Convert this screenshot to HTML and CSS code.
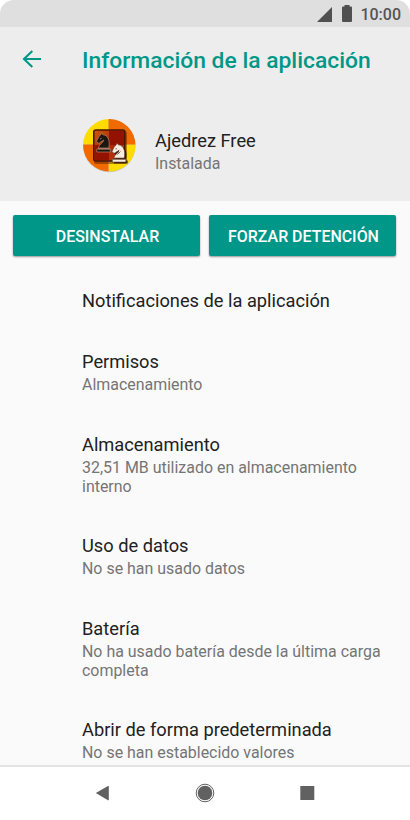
FILE: index.html
```html
<!DOCTYPE html>
<html lang="es">
<head>
<meta charset="utf-8">
<title>Información de la aplicación</title>
<link rel="stylesheet" href="styles.css">
</head>
<body>
<div class="phone">
  <div class="status">
    <svg class="signal" width="15" height="15" viewBox="0 0 15 15"><path d="M0 15L15 0V15Z"/></svg>
    <svg class="battery" width="10" height="17" viewBox="0 0 10 17"><path d="M2.5 0h5v1.6H9q1 0 1 1V16q0 1-1 1H1q-1 0-1-1V2.600q0-1 1-1h1.500z"/></svg>
    <span class="clock">10:00</span>
  </div>
  <header class="header">
    <div class="toolbar">
      <svg class="back" width="20" height="18" viewBox="0 0 20 18"><path d="M10.300 1L2 9l8.300 8M2 9h17"/></svg>
      <h1 class="title">Información de la aplicación</h1>
    </div>
    <div class="app">
      <svg class="app-icon" width="54" height="54" viewBox="0 0 54 54">
        <defs>
          <clipPath id="disc"><circle cx="27.300" cy="26.300" r="26.200"/></clipPath>
          <linearGradient id="board" x1="0" y1="0" x2="1" y2="1"><stop offset="0" stop-color="#cc5a0c"/><stop offset=".5" stop-color="#ae2806"/><stop offset="1" stop-color="#c23c08"/></linearGradient>
          <path id="knight" d="M2.300 15.300C3 11.500 7.300 10.300 7.600 7.400C6.200 8.800 4.800 8.600 3.600 10.200L2.200 10.500L.5 8.600L2.600 4.200L4.600 2.300L5.200.2L7 2C11.800 2.400 14.300 7.500 12.800 15.300ZM.8 16.300H14.400V19.300H.8Z"/>
        </defs>
        <circle cx="27.300" cy="27" r="26.200" fill="#c5c5c5"/>
        <g clip-path="url(#disc)">
          <path fill="#ffdc00" d="M0 0H26.500V25.500H0ZM26.500 25.500H54V54H26.500Z"/>
          <path fill="#f06a00" d="M26.500 0H54V25.500H26.500ZM0 25.500H26.500V54H0Z"/>
        </g>
        <rect x="12" y="12" width="33" height="33" rx="2.500" fill="#4b1704" opacity=".45"/>
        <rect x="11.800" y="11" width="31" height="31" rx="2" fill="url(#board)" stroke="#4a1604" stroke-width="1.600"/>
        <path fill="#941200" d="M27 12h15v14H27zM12.600 26H27v15H12.600z"/>
        <use href="#knight" x="14" y="13.700" fill="#1d1714" stroke="#c79b7c" stroke-width=".6"/>
        <use href="#knight" x="31.300" y="25.300" fill="#291004" opacity=".8"/>
        <use href="#knight" x="29.500" y="23.800" fill="#f6ecdf" stroke="#4d2a18" stroke-width=".6"/>
        <path d="M33.500 30l1.500-.5M35.500 35.500l3-3M31 40.100h12.500" stroke="#65432e" fill="none" stroke-width=".8"/>
        <path d="M18 20l1.500-.6M16 29.900h12" stroke="#d0a98b" fill="none" stroke-width=".7"/>
      </svg>
      <div>
        <div class="name">Ajedrez Free</div>
        <div class="sub">Instalada</div>
      </div>
    </div>
  </header>
  <main class="content">
    <div class="buttons">
      <button class="button">DESINSTALAR</button>
      <button class="button">FORZAR DETENCIÓN</button>
    </div>
    <div class="list">
      <section><div class="name">Notificaciones de la aplicación</div></section>
      <section><div class="name">Permisos</div><div class="sub">Almacenamiento</div></section>
      <section><div class="name">Almacenamiento</div><div class="sub">32,51 MB utilizado en almacenamiento interno</div></section>
      <section><div class="name">Uso de datos</div><div class="sub">No se han usado datos</div></section>
      <section><div class="name">Batería</div><div class="sub">No ha usado batería desde la última carga completa</div></section>
      <section><div class="name">Abrir de forma predeterminada</div><div class="sub">No se han establecido valores<br>predeterminados</div></section>
    </div>
  </main>
  <nav class="nav">
    <svg width="28" height="28" viewBox="0 0 28 28"><path d="M7.800 14L20 7q.8-.3.8.6v13.200q0 .8-.8.400z"/></svg>
    <svg width="28" height="28" viewBox="0 0 28 28"><circle cx="14" cy="14" r="7.300"/><circle class="ring" cx="14" cy="14" r="8.800"/></svg>
    <svg width="28" height="28" viewBox="0 0 28 28"><rect x="7.300" y="7" width="14" height="14" rx=".6"/></svg>
  </nav>
</div>
</body>
</html>
```
FILE: styles.css
```css
* { box-sizing: border-box; }
body { margin: 0; background: #fff; font-family: Roboto, sans-serif; }
.phone {
  width: 410px;
  height: 820px;
  display: flex;
  flex-direction: column;
  overflow: hidden;
  border-radius: 14px;
  background: #fff;
}
.status {
  height: 27px;
  flex: none;
  display: flex;
  align-items: center;
  justify-content: flex-end;
  padding: 2px 9px 0 0;
  background: #dfdfdf;
  color: #555;
}
.status svg { fill: #505050; }
.signal { margin-right: 10px; }
.battery { margin: -2px 8.500px 0 0; }
.clock { font-size: 16px; font-weight: 500; line-height: 20px; }
.header { height: 174px; flex: none; background: #ededed; }
.toolbar { height: 65px; display: flex; align-items: center; padding-left: 22px; }
.back { fill: none; stroke: #009788; stroke-width: 2.1; margin: -1px 40px 0 0; }
.title { margin: 2px 0 0; font-size: 22.85px; font-weight: 500; line-height: 28px; color: #009788; white-space: nowrap; }
.app { display: flex; align-items: flex-start; padding: 27px 0 0 82px; }
.app-icon { margin-right: 19px; flex: none; }
.app .name { margin-top: 11px; }
.name { font-size: 18.25px; line-height: 21.4px; color: #212121; white-space: nowrap; }
.sub { margin: 2.6px 0 -.5px; font-size: 15.95px; line-height: 19px; color: #757575; }
.content { flex: 1; min-height: 0; overflow: hidden; background: #fafafa; }
.buttons { display: flex; gap: 9px; padding: 14px 14px 0 13px; }
.button {
  flex: 1 1 0;
  height: 41px;
  padding: 2px 0 0 2px;
  border: 0;
  border-radius: 2px;
  background: #009788;
  box-shadow: 0 1px 2px rgba(0, 0, 0, .4);
  color: #fff;
  font: 500 15.95px/20px Roboto, sans-serif;
  white-space: nowrap;
}
.list { display: flex; flex-direction: column; gap: 40px; padding: 33.600px 24px 0 82px; }
.nav {
  height: 55px;
  flex: none;
  display: flex;
  justify-content: center;
  gap: 74.500px;
  padding-top: 12px;
  border-top: 2px solid #e4e4e4;
  background: #fff;
}
.nav svg { fill: #616161; }
.nav svg:first-child { margin-left: -1px; }
.nav .ring { fill: none; stroke: #616161; stroke-width: 1; }
```
